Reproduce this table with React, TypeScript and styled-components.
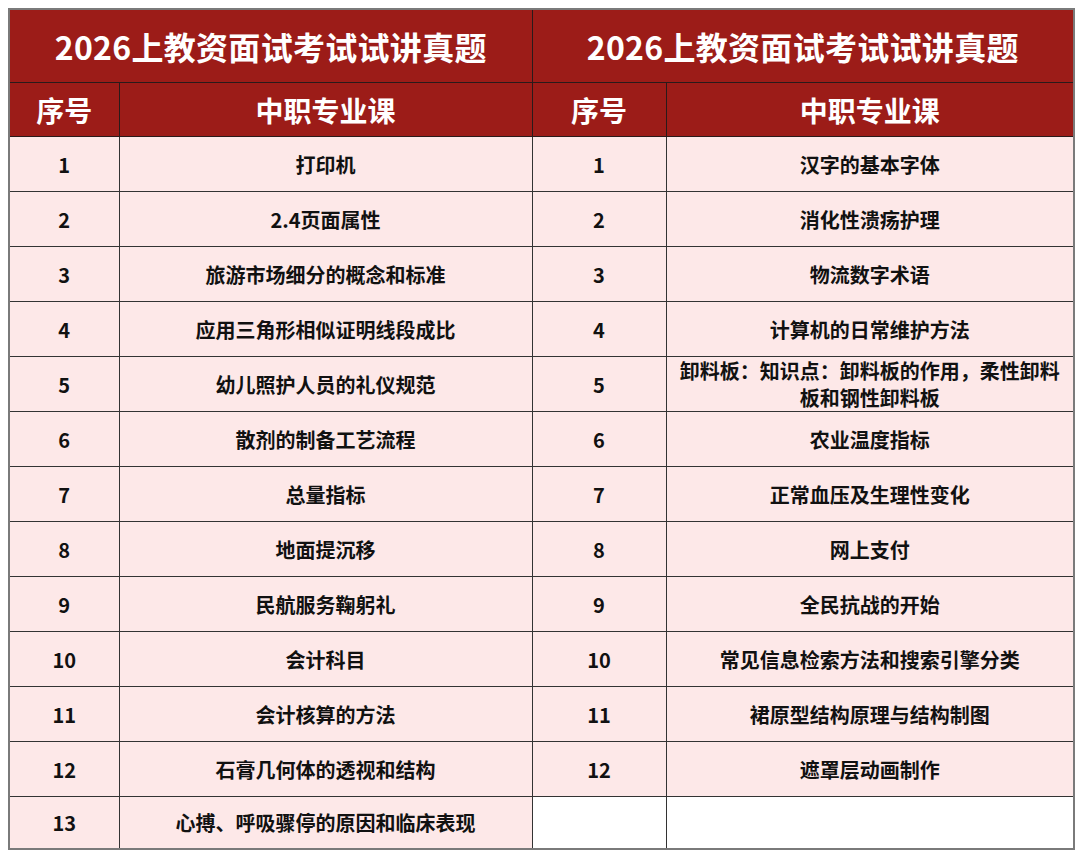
import React from "react";
import styled, { createGlobalStyle } from "styled-components";

const Global = createGlobalStyle`
  html, body { margin: 0; padding: 0; background: #ffffff; }
  body { font-family: "Noto Sans CJK SC", "Noto Sans", sans-serif; }
`;

const Page = styled.div`
  padding: 8px 0 0 8px;
`;

const Table = styled.table`
  width: 1065px;
  table-layout: fixed;
  border-collapse: collapse;
  border: 2px solid #7a7a7a;
  font-family: "Noto Sans CJK SC", "Noto Sans", sans-serif;
  font-weight: 700;
`;

const TitleCell = styled.th`
  height: 72px;
  background: #9c1c18;
  color: #ffffff;
  font-size: 32px;
  font-weight: 700;
  text-align: center;
  vertical-align: middle;
  border: 1px solid #2a1a1a;
  padding: 0;
  letter-spacing: 0.3px;
`;

const HeadCell = styled.th`
  height: 53px;
  background: #9c1c18;
  color: #ffffff;
  font-size: 28px;
  font-weight: 700;
  text-align: center;
  vertical-align: middle;
  border: 1px solid #2a1a1a;
  padding: 0;
`;

const Row = styled.tr<{ $h: number }>`
  height: ${(p) => p.$h}px;
`;

const Cell = styled.td<{ $blank?: boolean }>`
  background: ${(p) => (p.$blank ? "#ffffff" : "#fde8e8")};
  color: #111111;
  font-size: 20px;
  font-weight: 700;
  line-height: 27px;
  text-align: center;
  vertical-align: middle;
  border: 1px solid #333333;
  padding: 0 10px;
`;

const left = [
  "打印机",
  "2.4页面属性",
  "旅游市场细分的概念和标准",
  "应用三角形相似证明线段成比",
  "幼儿照护人员的礼仪规范",
  "散剂的制备工艺流程",
  "总量指标",
  "地面提沉移",
  "民航服务鞠躬礼",
  "会计科目",
  "会计核算的方法",
  "石膏几何体的透视和结构",
  "心搏、呼吸骤停的原因和临床表现",
];

const right = [
  "汉字的基本字体",
  "消化性溃疡护理",
  "物流数字术语",
  "计算机的日常维护方法",
  "卸料板：知识点：卸料板的作用，柔性卸料板和钢性卸料板",
  "农业温度指标",
  "正常血压及生理性变化",
  "网上支付",
  "全民抗战的开始",
  "常见信息检索方法和搜索引擎分类",
  "裙原型结构原理与结构制图",
  "遮罩层动画制作",
];

export default function App() {
  return (
    <Page>
      <Global />
      <Table>
        <colgroup>
          <col style={{ width: 110 }} />
          <col style={{ width: 413 }} />
          <col style={{ width: 134 }} />
          <col style={{ width: 408 }} />
        </colgroup>
        <thead>
          <tr>
            <TitleCell colSpan={2}>2026上教资面试考试试讲真题</TitleCell>
            <TitleCell colSpan={2}>2026上教资面试考试试讲真题</TitleCell>
          </tr>
          <tr>
            <HeadCell>序号</HeadCell>
            <HeadCell>中职专业课</HeadCell>
            <HeadCell>序号</HeadCell>
            <HeadCell>中职专业课</HeadCell>
          </tr>
        </thead>
        <tbody>
          {left.map((l, i) => {
            const r = right[i];
            return (
              <Row key={i} $h={i === 12 ? 52 : 55}>
                <Cell>{i + 1}</Cell>
                <Cell>{l}</Cell>
                <Cell $blank={r === undefined}>{r === undefined ? "" : i + 1}</Cell>
                <Cell $blank={r === undefined}>{r ?? ""}</Cell>
              </Row>
            );
          })}
        </tbody>
      </Table>
    </Page>
  );
}
